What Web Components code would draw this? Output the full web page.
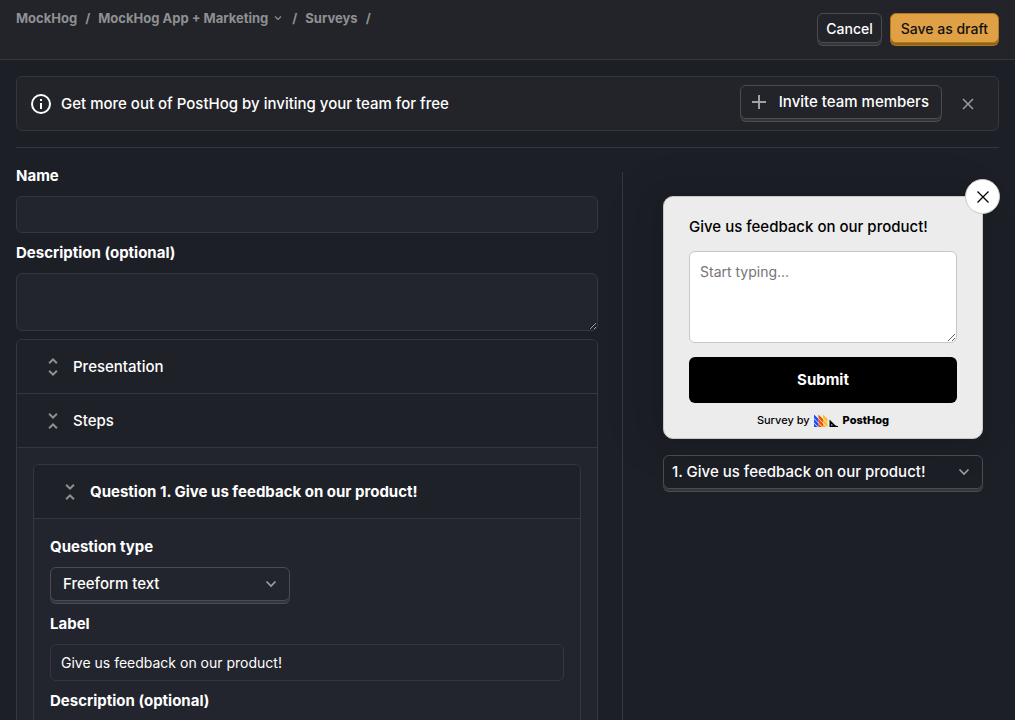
<!DOCTYPE html>
<html lang="en">
<head>
<meta charset="utf-8">
<meta name="viewport" content="width=device-width, initial-scale=1">
<title>New survey</title>
<style>
  :root {
    --bg: #1d1f27;
    --surface: #232429;
    --field: #22252d;
    --panel: #1f2128;
    --border: #35373e;
    --edge: #4a4c50;
    --depth: #343538;
    --muted: #8f9093;
    --text: #fff;
    scrollbar-width: none;
  }
  body {
    margin: 0;
    background: var(--bg);
    color: var(--text);
    font: 500 15px/24px Inter, "Liberation Sans", sans-serif;
  }
</style>
</head>
<body>
<survey-app></survey-app>
<script>
const define = (name, html, setup) => {
  const template = document.createElement('template');
  template.innerHTML = `<style>
    *, *::before, *::after { box-sizing: border-box; }
    :host { display: block; box-sizing: border-box; }
    button, input, select, textarea { font: inherit; color: inherit; margin: 0; }
    svg { display: block; flex: none; }
  </style>${html}`;
  customElements.define(name, class extends HTMLElement {
    constructor() {
      super();
      this.attachShadow({ mode: 'open' }).append(template.content.cloneNode(true));
    }
    connectedCallback() { if (setup) setup(this, this.shadowRoot); }
  });
};

const chevron = `<svg width="12" height="12" viewBox="0 0 12 12" fill="none" stroke="currentColor" stroke-width="1.600" aria-hidden="true"><path d="M1.500 3.500 6 8l4.500-4.500"/></svg>`;

/* Raised button with a thick lower edge */
define('raised-button', `
  <style>
    :host { padding-bottom: 3px; }
    button {
      display: flex; align-items: center; gap: 8px;
      height: 30px; padding: 2px 8px 0; font-size: 14px;
      border: 1px solid var(--edge); border-radius: 6px;
      background: var(--surface);
      box-shadow: 0 2px 0 var(--depth), 0 3px 0 var(--edge);
      white-space: nowrap; cursor: pointer;
    }
    :host([primary]) button {
      padding: 2px 10px 0; background: #e0a045; border-color: #b17816; color: #111;
      box-shadow: 0 2px 0 #8c6421, 0 3px 0 #b17816;
    }
    :host([large]) button { height: 34px; padding: 0 12px 0 6px; font-size: 15px; }
  </style>
  <button type="button"><slot name="icon"></slot><slot></slot></button>`);

define('crumb-trail', `
  <style>
    nav { display: flex; align-items: center; gap: 8px; font-size: 13px; font-weight: 700; line-height: 16px; color: var(--muted); }
    a { color: inherit; text-decoration: none; display: flex; align-items: center; gap: 4px; }
  </style>
  <nav aria-label="Breadcrumb">
    <a href="#">MockHog</a><span>/</span>
    <a href="#">MockHog App + Marketing
      <svg width="12" height="12" viewBox="0 0 12 12" fill="none" stroke="currentColor" stroke-width="1.200" aria-hidden="true"><path d="M3 4.500 6 7.500l3-3"/></svg></a><span>/</span>
    <a href="#">Surveys</a><span>/</span>
  </nav>`);

define('top-bar', `
  <style>
    :host { background: var(--surface); border-bottom: 1px solid var(--border); }
    header { display: flex; justify-content: space-between; padding: 10px 16px 13px; }
    .actions { display: flex; gap: 8px; padding-top: 3px; }
  </style>
  <header>
    <crumb-trail></crumb-trail>
    <div class="actions">
      <raised-button>Cancel</raised-button>
      <raised-button primary>Save as draft</raised-button>
    </div>
  </header>`);

define('invite-banner', `
  <style>
    :host { display: flex; align-items: center; gap: 8px; padding: 8px 16px 8px 12px;
      border: 1px solid var(--border); border-radius: 6px; background: var(--surface); }
    .message { flex: 1; }
    .close { display: grid; place-items: center; width: 28px; height: 28px; margin-left: 4px; padding: 0;
      border: 0; background: none; color: #9a9b9e; cursor: pointer; }
  </style>
  <svg width="24" height="24" viewBox="0 0 24 24" fill="currentColor" aria-hidden="true"><path d="M11 7h2v2h-2zm0 4h2v6h-2zm1-9a10 10 0 1 0 0 20 10 10 0 0 0 0-20m0 18a8 8 0 1 1 0-16 8 8 0 0 1 0 16"/></svg>
  <span class="message">Get more out of PostHog by inviting your team for free</span>
  <raised-button large>
    <svg slot="icon" width="24" height="24" viewBox="0 0 24 24" stroke="#a0a1a3" stroke-width="2" aria-hidden="true"><path d="M12 5v14M5 12h14"/></svg>Invite team members
  </raised-button>
  <button class="close" type="button" aria-label="Dismiss">
    <svg width="12" height="12" viewBox="0 0 12 12" stroke="currentColor" stroke-width="1.500" aria-hidden="true"><path d="m1 1 10 10M11 1 1 11"/></svg>
  </button>`);

/* Labelled single-line or multi-line field */
define('form-field', `
  <style>
    :host { display: grid; gap: 8px; }
    label { font-weight: 700; }
    input, textarea {
      display: block; width: 100%; height: 37px; padding: 0 10px;
      border: 1px solid var(--border); border-radius: 6px;
      background: var(--field); font-size: 14px; font-weight: 400; outline: 0;
    }
    textarea { height: 58px; padding: 8px 10px; resize: vertical; color-scheme: dark; }
  </style>
  <label for="control"></label>`, (host, root) => {
  if (root.getElementById('control')) return;
  const control = document.createElement(host.hasAttribute('multiline') ? 'textarea' : 'input');
  control.id = 'control';
  control.value = host.getAttribute('value') || '';
  root.querySelector('label').textContent = host.getAttribute('label');
  root.append(control);
});

define('drop-down', `
  <style>
    :host { display: grid; gap: 8px; }
    label { font-weight: 700; }
    .box { display: grid; align-items: center; padding-bottom: 3px; }
    .box > * { grid-area: 1 / 1; }
    select {
      appearance: none; width: 100%; height: 34px; padding: 0 32px 0 var(--inset, 12px);
      border: 1px solid var(--edge); border-radius: 6px; background: var(--fill, var(--field));
      box-shadow: 0 2px 0 var(--depth), 0 3px 0 var(--edge); outline: 0;
    }
    svg { justify-self: end; margin-right: 13px; color: #a0a1a3; pointer-events: none; }
  </style>
  <div class="box"><select id="control"><option></option></select>${chevron}</div>`, (host, root) => {
  const select = root.getElementById('control');
  select.options[0].textContent = host.getAttribute('value');
  const name = host.getAttribute('label');
  if (name && !root.querySelector('label')) {
    const label = document.createElement('label');
    label.htmlFor = 'control';
    label.textContent = name;
    root.querySelector('.box').before(label);
  } else if (!name) select.setAttribute('aria-label', 'Previewed question');
});

define('collapse-group', `
  <style>
    :host { border: 1px solid var(--border); border-radius: 6px; background: var(--field); overflow: hidden; }
  </style><slot></slot>`);

define('collapse-panel', `
  <style>
    :host(:not(:first-child)) { border-top: 1px solid var(--border); }
    button { display: flex; align-items: center; gap: 8px; width: 100%; height: 53px; padding: 0 24px;
      border: 0; background: var(--panel); text-align: left; cursor: pointer; }
    :host([strong]) button { font-weight: 700; }
    svg { color: var(--muted); }
    .open { display: none; }
    :host([open]) .open { display: block; }
    :host([open]) .shut { display: none; }
    .content { display: none; gap: 8px; padding: 16px; border-top: 1px solid var(--border); }
    :host([open]) .content { display: grid; }
  </style>
  <button type="button">
    <svg class="shut" width="24" height="24" viewBox="0 0 24 24" fill="currentColor" aria-hidden="true"><path d="M12 5.830 15.170 9l1.410-1.410L12 3 7.410 7.590 8.830 9zm0 12.340L8.830 15l-1.410 1.410L12 21l4.590-4.590L15.170 15z"/></svg>
    <svg class="open" width="24" height="24" viewBox="0 0 24 24" fill="currentColor" aria-hidden="true"><path d="M7.410 18.590 8.830 20 12 16.830 15.170 20l1.410-1.410L12 14zM16.590 5.410 15.170 4 12 7.170 8.830 4 7.410 5.410 12 10z"/></svg>
    <slot name="title"></slot>
  </button>
  <div class="content"><slot></slot></div>`, (host, root) => {
  const button = root.querySelector('button');
  button.setAttribute('aria-expanded', host.hasAttribute('open'));
  button.onclick = () => button.setAttribute('aria-expanded', host.toggleAttribute('open'));
});

define('hog-logo', `
  <style>
    :host { display: flex; align-items: center; gap: 4px; font-weight: 800; font-size: 11px; line-height: 16px; }
  </style>
  <svg width="25" height="13" viewBox="0 0 25 13" aria-hidden="true">
    <path fill="#1d4aff" d="M0 0.500 4.500 5v3.500L0 4zM0 5 4.500 9.500V13L0 8.500zM0 9.500 3.500 13H0z"/>
    <path fill="#f54e00" d="M4.500 0.500 9 5v3.500L4.500 4zM4.500 5 9 9.500V13L4.500 8.500zM4.500 9.500 8 13H4.500z"/>
    <path fill="#f9bd2b" d="M9 0.500 13.500 5v3.500L9 4zM9 5l4.500 4.500V13L9 8.500zM9 9.500 12.500 13H9z"/>
    <path fill="#000" d="M15.500 5.500 21 11c.600.600 1.800 1 3 1v1h-8.500z"/>
    <circle cx="17.800" cy="11" r=".7" fill="#eee"/>
  </svg><span>PostHog</span>`);

define('survey-popup', `
  <style>
    :host { position: relative; padding: 18px 25px 10px; border: 1px solid #c9c6c6; border-radius: 10px;
      background: #ececec; color: #000;
      box-shadow: -6px 0 16px -8px rgb(0 0 0 / 8%), -9px 0 28px 0 rgb(0 0 0 / 5%), -12px 0 48px 16px rgb(0 0 0 / 3%); }
    label { display: block; }
    textarea { display: block; width: 100%; height: 92px; margin: 12px 0 14px; padding: 8px 10px;
      border: 1px solid #c9c6c6; border-radius: 6px; background: #fff; font-size: 14px; font-weight: 400; resize: vertical; outline: 0; }
    textarea::placeholder { color: #757575; }
    .submit { display: block; width: 100%; height: 46px; border: 0; border-radius: 6px; background: #000; color: #fff; font-weight: 700; cursor: pointer; }
    .close { position: absolute; top: -18px; right: -18px; display: grid; place-items: center;
      width: 35px; height: 35px; padding: 0; border: 1px solid #c9c6c6; border-radius: 50%; background: #fff; cursor: pointer; }
    .brand { display: flex; align-items: center; justify-content: center; gap: 4px; margin-top: 9px;
      color: inherit; text-decoration: none; font-size: 11px; line-height: 16px; }
  </style>
  <button class="close" type="button" aria-label="Close survey">
    <svg width="12" height="12" viewBox="0 0 12 12" stroke="#000" stroke-width="1.300" aria-hidden="true"><path d="m.5.5 11 11M11.500.5l-11 11"/></svg>
  </button>
  <label for="answer">Give us feedback on our product!</label>
  <textarea id="answer" placeholder="Start typing..."></textarea>
  <button class="submit" type="button">Submit</button>
  <a class="brand" href="#"><span>Survey by</span><hog-logo></hog-logo></a>`);

define('survey-editor', `
  <style>
    :host { display: grid; gap: 8px; }
    drop-down { width: 240px; }
  </style>
  <form-field label="Name"></form-field>
  <form-field label="Description (optional)" multiline></form-field>
  <collapse-group>
    <collapse-panel><span slot="title">Presentation</span></collapse-panel>
    <collapse-panel open>
      <span slot="title">Steps</span>
      <collapse-group>
        <collapse-panel open strong>
          <span slot="title">Question 1. Give us feedback on our product!</span>
          <drop-down label="Question type" value="Freeform text"></drop-down>
          <form-field label="Label" value="Give us feedback on our product!"></form-field>
          <form-field label="Description (optional)" multiline></form-field>
        </collapse-panel>
      </collapse-group>
    </collapse-panel>
  </collapse-group>`);

define('survey-preview', `
  <style>
    :host { display: grid; gap: 16px; align-content: start; margin-top: 8px;
      padding: 24px 16px 0 40px; border-left: 1px solid var(--border); }
    drop-down { --inset: 8px; --fill: var(--bg); }
  </style>
  <survey-popup></survey-popup>
  <drop-down value="1. Give us feedback on our product!"></drop-down>`);

define('survey-app', `
  <style>
    main { padding: 16px 16px 0; }
    hr { height: 1px; margin: 16px 0; border: 0; background: var(--border); }
    .columns { display: grid; grid-template-columns: minmax(0, 1fr) 377px; gap: 24px; }
  </style>
  <top-bar></top-bar>
  <main>
    <invite-banner></invite-banner>
    <hr>
    <div class="columns">
      <survey-editor></survey-editor>
      <survey-preview></survey-preview>
    </div>
  </main>`);
</script>
</body>
</html>
